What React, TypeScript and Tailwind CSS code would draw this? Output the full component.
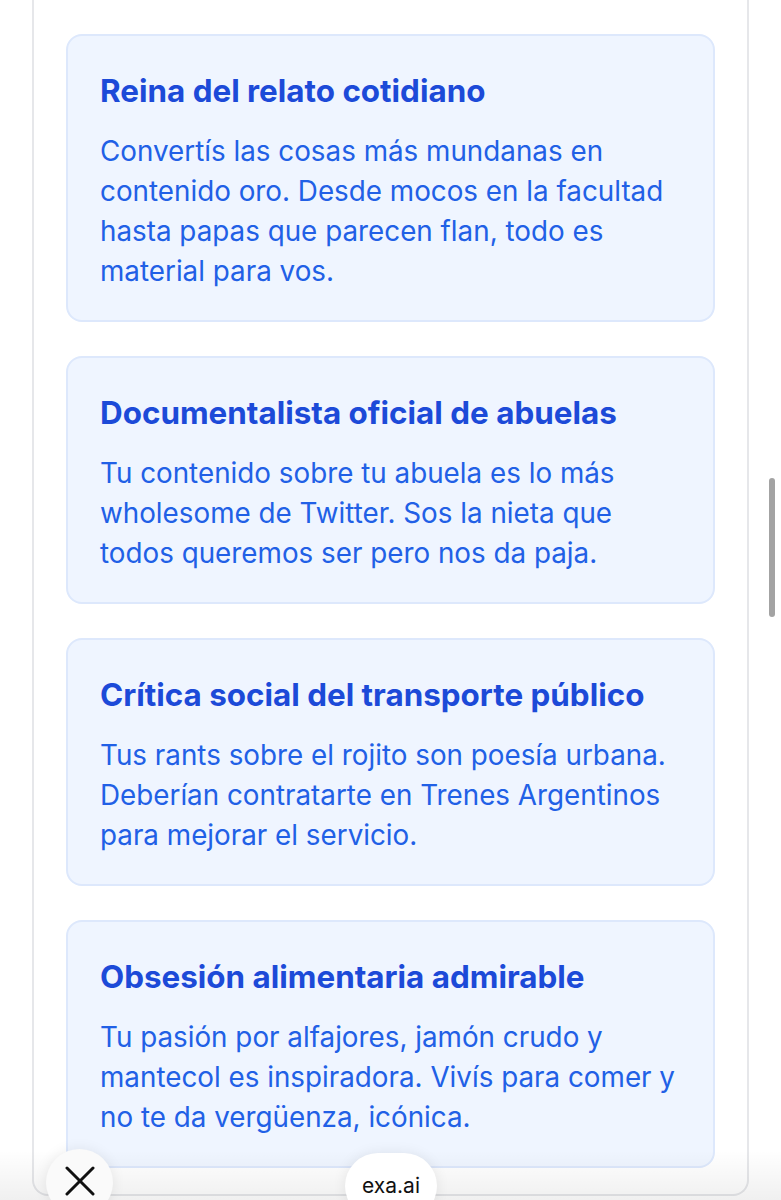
const cards = [
	{
		title: "Reina del relato cotidiano",
		lines: [
			"Convertís las cosas más mundanas en",
			"contenido oro. Desde mocos en la facultad",
			"hasta papas que parecen flan, todo es",
			"material para vos.",
		],
	},
	{
		title: "Documentalista oficial de abuelas",
		lines: [
			"Tu contenido sobre tu abuela es lo más",
			"wholesome de Twitter. Sos la nieta que",
			"todos queremos ser pero nos da paja.",
		],
	},
	{
		title: "Crítica social del transporte público",
		lines: [
			"Tus rants sobre el rojito son poesía urbana.",
			"Deberían contratarte en Trenes Argentinos",
			"para mejorar el servicio.",
		],
	},
	{
		title: "Obsesión alimentaria admirable",
		lines: [
			"Tu pasión por alfajores, jamón crudo y",
			"mantecol es inspiradora. Vivís para comer y",
			"no te da vergüenza, icónica.",
		],
	},
];

const TraitCard = ({title, lines}: {title: string; lines: string[]}) => {
	return (
		<div className="rounded-[16px] border-2 border-[#dde8fc] bg-[#eff5ff] px-8 pt-[37px] pb-[29px]">
			<h3 className="mb-[22px] text-[31.4px] leading-[36px] font-bold text-[#1c4ad8]">{title}</h3>
			<p className="text-[27.8px] leading-[40px] text-[#2160e6]">
				{lines.map((l, i) => (
					<span key={i} className="block whitespace-nowrap">
						{l}
					</span>
				))}
			</p>
		</div>
	);
};

export default function App() {
	return (
		<div className="relative h-[1200px] w-[781px] overflow-hidden bg-white font-['Inter','Liberation_Sans',sans-serif]">
			<div className="mx-[32px] rounded-b-[16px] border-x-2 border-b-2 border-[#e6e7ea] px-[32px] pt-[34px] pb-[26px]">
				<div className="flex flex-col gap-[34px]">
					{cards.map((c) => (
						<TraitCard key={c.title} title={c.title} lines={c.lines} />
					))}
				</div>
			</div>

			{/* bottom fade */}
			<div className="pointer-events-none absolute right-0 bottom-0 left-0 h-[50px] bg-gradient-to-b from-transparent to-black/[0.06]"></div>

			{/* scrollbar */}
			<div className="absolute top-[478px] left-[769px] h-[139px] w-[6px] rounded-full bg-[#a3a3a3]"></div>

			<button className="absolute top-[1149px] left-[46px] flex h-[67px] w-[67px] items-center justify-center rounded-full bg-[#fafafa] pb-[3px] shadow-[0_0_14px_rgba(0,0,0,0.08)]">
				<svg width="30" height="30" viewBox="0 0 30 30" fill="none" stroke="#111" strokeWidth="3" strokeLinecap="round">
					<path d="M2 2L28 28" />
					<path d="M28 2L2 28" />
				</svg>
			</button>

			<div className="absolute top-[1153px] left-[345px] flex h-[66px] w-[92px] justify-center rounded-full bg-white pt-[19px] text-[21px] leading-[28px] text-[#111] shadow-[0_0_14px_rgba(0,0,0,0.08)]">
				exa.ai
			</div>
		</div>
	);
}
